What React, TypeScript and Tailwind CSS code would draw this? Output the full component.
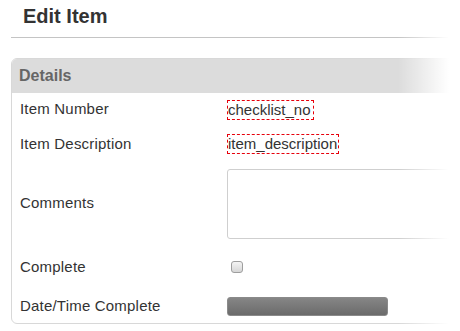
import React from "react";

const rows = "flex items-center";

const App: React.FC = () => {
  return (
    <div className="relative w-[460px] h-[331px] overflow-hidden bg-white font-['Liberation_Sans',Arial,sans-serif] text-[#333]">
      <div className="pl-[11px]">
        <h1 className="pt-[5px] pl-[12px] text-[20px] leading-[23px] font-bold text-[#333]">
          Edit Item
        </h1>
        <div className="mt-[9px] w-[480px] border-t border-[#c4c4c4]" />

        <div className="mt-[20px] w-[520px] rounded-l-[6px] border border-[#d8d8d8]">
          <div className="h-[34px] flex items-center pl-[7px] rounded-tl-[5px] bg-[#dcdcdc] text-[16px] font-bold text-[#666]">
            Details
          </div>
          <div className="pl-[8px] text-[15px]">
            <div className={`${rows} h-[33px]`}>
              <div className="w-[207px] tracking-[0.2px]">Item Number</div>
              <span className="ml-[1px] inline-block h-[18px] leading-[18px] pr-[2px] outline-1 outline-dashed outline-red-600">
                checklist_no
              </span>
            </div>
            <div className={`${rows} h-[36px]`}>
              <div className="w-[207px] tracking-[0.2px]">Item Description</div>
              <span className="ml-[1px] inline-block h-[18px] leading-[18px] pr-[1px] outline-1 outline-dashed outline-red-600">
                item_description
              </span>
            </div>
            <div className={`${rows} h-[83px]`}>
              <div className="w-[207px] tracking-[0.2px]">Comments</div>
              <textarea className="w-[260px] h-[70px] rounded-[3px] border border-[#cfcfcf] resize-none" />
            </div>
            <div className={`${rows} h-[44px]`}>
              <div className="w-[207px] tracking-[0.2px]">Complete</div>
              <span className="ml-[4px] w-[12px] h-[12px] rounded-[3px] border border-[#9e9e9e] bg-linear-to-b from-[#f4f4f4] to-[#d6d6d6]" />
            </div>
            <div className={`${rows} h-[34px]`}>
              <div className="w-[207px] tracking-[0.2px]">Date/Time Complete</div>
              <div className="w-[161px] h-[19px] rounded-[3px] border border-[#8a8a8a] bg-linear-to-b from-[#868686] to-[#6b6b6b]" />
            </div>
          </div>
        </div>
      </div>
      <div className="absolute top-0 bottom-0 right-0 w-[62px] bg-linear-to-r from-white/0 to-white to-[82%]" />
    </div>
  );
};

export default App;
